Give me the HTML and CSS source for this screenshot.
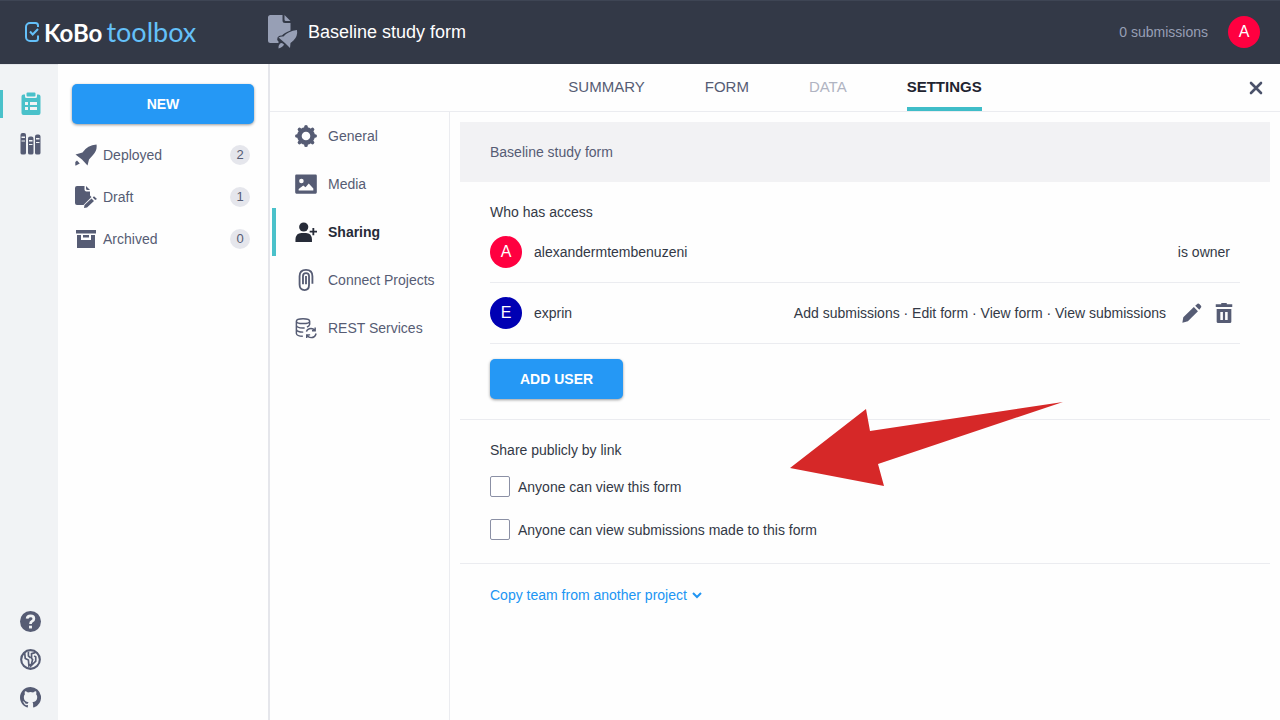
FILE: index.html
```html
<!DOCTYPE html>
<html lang="en">
<head>
<meta charset="utf-8">
<meta name="viewport" content="width=device-width, initial-scale=1">
<title>Baseline study form</title>
<link rel="stylesheet" href="styles.css">
</head>
<body>
<header class="header">
  <a class="logo" href="#">
    <svg class="logo-mark" viewBox="0 0 16 22" aria-hidden="true"><path d="M14 6V4.500A2.500 2.500 0 0 0 11.500 2H6A4 4 0 0 0 2 6V16A4 4 0 0 0 6 20H11.500A2.500 2.500 0 0 0 14 17.500V14.500M6 10.500L8.700 13.500L14 8"/></svg>
    <span class="logo-text"><b>KoBo</b> <i>toolbox</i></span>
  </a>
  <div class="project">
    <svg class="project-icon" viewBox="0 0 30 34" aria-hidden="true"><path d="M2.500 0H14.500V5.500Q14.500 8 17 8H22.500V15.500Q16 18 14 20.500Q11 20 9.500 22.500Q8.500 24.500 10.500 26.500V28H2.500Q0 28 0 25.500V2.500Q0 0 2.500 0ZM16.500 0L22.500 6H18Q16.500 6 16.500 4.500ZM29 15Q30 21 25.500 25.500L22.500 28L22 33L17.500 28.500L10.500 22.500Q13 21 15.500 21.500Q20 16 29 15ZM12 28.500Q14 27 16 29.500Q15 32 10.500 33.500Q10.500 30 12 28.500Z"/></svg>
    <h1 class="project-title">Baseline study form</h1>
  </div>
  <span class="count">0 submissions</span>
  <button class="avatar avatar-red" type="button" aria-label="Account">A</button>
</header>

<div class="shell">
  <nav class="rail" aria-label="Main">
    <a class="rail-link rail-active" href="#" aria-label="Projects"><svg class="icon" viewBox="0 0 24 24"><path fill-rule="evenodd" d="M7.500 1.500Q7.500 .5 8.500 .5H15.500Q16.500 .5 16.500 1.500V3.500Q16.500 4.500 15.500 4.500H8.500Q7.500 4.500 7.500 3.500ZM4.500 2.500H6V4.500Q6 6 7.500 6H16.500Q18 6 18 4.500V2.500H19.500Q21.500 2.500 21.500 4.500V21Q21.500 23 19.500 23H4.500Q2.500 23 2.500 21V4.500Q2.500 2.500 4.500 2.500ZM6 10V13H9V10ZM11 10V13H18V10ZM6 15V18H9V15ZM11 15V18H18V15Z"/></svg></a>
    <a class="rail-link" href="#" aria-label="Library"><svg class="icon" viewBox="0 0 24 24"><path fill-rule="evenodd" d="M3.500 1H5Q7 1 7 3V21Q7 22.500 5 22.500H3.500Q1.500 22.500 1.500 21V3Q1.500 1 3.500 1ZM2.500 4.500V6H6V4.500ZM2.500 8.500V9.500H6V8.500ZM11 4.500H12.500Q14.500 4.500 14.500 6.500V21Q14.500 22.500 12.500 22.500H11Q9 22.500 9 21V6.500Q9 4.500 11 4.500ZM10 8V9.500H13.500V8ZM10 12V13H13.500V12ZM18 2.500H19.500Q21.500 2.500 21.500 4.500V21Q21.500 22.500 19.500 22.500H18Q16 22.500 16 21V4.500Q16 2.500 18 2.500ZM17 6V7.500H20.500V6ZM17 10V11H20.500V10Z"/></svg></a>
    <div class="rail-bottom">
      <a class="rail-small" href="#" aria-label="Help"><svg class="icon-small" viewBox="0 0 20 20"><circle cx="10" cy="10" r="10"/><path class="cut-line" d="M6.800 7.300Q7 4.600 10 4.600Q13.200 4.600 13.200 7.300Q13.200 9 11.500 9.700Q10 10.300 10 12.300"/><rect class="cut" x="8.600" y="14" width="2.800" height="2.600"/></svg></a>
      <a class="rail-small" href="#" aria-label="Language and region"><svg class="icon-small" viewBox="0 0 20 20"><circle class="line" cx="10" cy="10" r="8.900"/><path class="line-thin" d="M4.500 4L5 9L8 10.500L8.500 16L10 14.500M8 2.500V6.500L10 8.500M14.500 3.500L11 4.500V9L12 10L10.500 16L15 11.500V7.500L13.500 6.500"/></svg></a>
      <a class="rail-small" href="#" aria-label="Source code"><svg class="icon-small" viewBox="0 0 16 16"><path d="M8 0C3.580 0 0 3.580 0 8c0 3.540 2.290 6.530 5.470 7.590.4.070.55-.17.55-.38 0-.19-.01-.82-.01-1.490-2.010.37-2.530-.49-2.690-.94-.09-.23-.48-.94-.82-1.130-.28-.15-.68-.52-.01-.53.63-.01 1.080.58 1.230.82.72 1.210 1.870.87 2.330.66.07-.52.28-.87.51-1.070-1.780-.2-3.640-.89-3.640-3.950 0-.87.31-1.590.82-2.150-.08-.2-.36-1.020.08-2.120 0 0 .67-.21 2.200.82a7.600 7.600 0 0 1 4 0c1.530-1.040 2.200-.82 2.200-.82.44 1.100.16 1.920.08 2.120.51.56.82 1.270.82 2.150 0 3.070-1.870 3.750-3.650 3.950.29.25.54.73.54 1.480 0 1.070-.01 1.930-.01 2.200 0 .21.15.46.55.38A8 8 0 0 0 8 0Z"/></svg></a>
    </div>
  </nav>

  <aside class="sidebar">
    <button class="button" type="button">NEW</button>
    <ul class="statuses">
      <li><a class="status" href="#"><svg class="icon" viewBox="0 0 22 22"><path d="M21.500 .5Q22.500 6 18 11L14 15.500L12.500 21.500L7 15.500L.5 10.500L7.500 8.500Q12.500 1 21.500 .5ZM2 16.500L4.800 19.500L1 21.500H.3V18Z"/></svg><span class="status-name">Deployed</span><span class="badge">2</span></a></li>
      <li><a class="status" href="#"><svg class="icon" viewBox="0 0 22 22"><path d="M2 0H9.500V3.500Q9.500 5.500 11.500 5.500H15V9.500L16.500 11L8.500 19H2Q0 19 0 17V2Q0 0 2 0ZM11 0L15 4H12.500Q11 4 11 2.500ZM9 22L9.500 19L16.500 12.500L19 15L12 21.500ZM17.700 11.500L19 10.200L22 13L20.200 14Z"/></svg><span class="status-name">Draft</span><span class="badge">1</span></a></li>
      <li><a class="status" href="#"><svg class="icon" viewBox="0 0 22 22"><path fill-rule="evenodd" d="M1 2H21V5.500H1ZM2 7H20V20H2ZM6 7V12H16V7H14V9.500H8V7Z"/></svg><span class="status-name">Archived</span><span class="badge">0</span></a></li>
    </ul>
  </aside>

  <main class="main">
    <div class="tabbar">
      <nav class="tabs" aria-label="Project">
        <a class="tab" href="#">SUMMARY</a>
        <a class="tab" href="#">FORM</a>
        <a class="tab tab-disabled" aria-disabled="true">DATA</a>
        <a class="tab tab-active" href="#" aria-current="page">SETTINGS</a>
      </nav>
      <button class="close" type="button" aria-label="Close"><svg class="close-icon" viewBox="0 0 14 14"><path d="M2 2L12 12M12 2L2 12"/></svg></button>
    </div>

    <div class="workspace">
      <nav class="subnav" aria-label="Settings">
        <a class="subnav-link" href="#"><svg class="icon" viewBox="0 0 24 24"><circle class="gear-ring" cx="12" cy="12" r="7.200"/><path class="gear-teeth" d="M12 2V4M12 20V22M2 12H4M20 12H22M4.900 4.900L6.300 6.300M17.700 17.700L19.100 19.100M4.900 19.100L6.300 17.700M17.700 6.300L19.100 4.900"/></svg>General</a>
        <a class="subnav-link" href="#"><svg class="icon" viewBox="0 0 24 24"><path fill-rule="evenodd" d="M1.500 1.500H22.500Q23.800 1.500 23.800 3V21Q23.800 22.500 22.500 22.500H1.500Q.2 22.500 .2 21V3Q.2 1.500 1.500 1.500ZM7 6.200A2.500 2.500 0 1 0 7 11.200A2.500 2.500 0 1 0 7 6.200ZM4 19H20V17L15 11.500L11.500 15.500L9 13.500L4 17.500Z"/></svg>Media</a>
        <a class="subnav-link subnav-active" href="#" aria-current="page"><svg class="icon" viewBox="0 0 24 24"><circle cx="9.500" cy="6.500" r="5"/><path d="M.5 23V20Q1 13 7 13H12Q18 13 18.500 20V23ZM19 7.500H21V10.500H24V12.500H21V15.500H19V12.500H16V10.500H19Z"/></svg>Sharing</a>
        <a class="subnav-link" href="#"><svg class="icon" viewBox="0 0 24 24"><path class="clip" d="M12 7.500V16.500M8.700 16.500V8Q8.700 4.500 12 4.500Q15.300 4.500 15.300 8V17.500Q15.300 23 10.500 23Q5 23 5 17V8Q5 1 12 1Q19 1 19 8V16"/></svg>Connect Projects</a>
        <a class="subnav-link" href="#"><svg class="icon" viewBox="0 0 24 24"><path class="line-thin" d="M1.500 4.500C1.500 1 16 1 16 4.500S1.500 8 1.500 4.500V18Q2 21 8.500 21M1.500 9Q2 12 8.500 12H10.500M1.500 13.500Q2 16.500 9 16.500M16 4.500V8Q15.500 10 13 11M12.500 16Q13.500 12.500 17.500 12.500Q20 12.500 21.500 14.500M22 11.500V15H18.500M23 18Q22 22.500 17.500 22.500Q15 22.500 13.300 20M12.800 23V19.500H16.500"/></svg>REST Services</a>
      </nav>

      <div class="content">
        <h2 class="form-name">Baseline study form</h2>

        <section class="section">
          <h3 class="section-title">Who has access</h3>
          <ul class="users">
            <li class="user">
              <span class="avatar avatar-red">A</span>
              <span class="user-name">alexandermtembenuzeni</span>
              <span class="role">is owner</span>
            </li>
            <li class="user">
              <span class="avatar avatar-blue">E</span>
              <span class="user-name">exprin</span>
              <span class="perms">Add submissions · Edit form · View form · View submissions</span>
              <span class="actions">
                <button class="icon-button" type="button" aria-label="Edit"><svg class="icon" viewBox="0 0 24 24"><path d="M1.500 22.500L2.500 16.500L14 5.500L18.500 10L7.500 21ZM15.500 4L18 2Q19 1.300 20 2.200L21.800 4Q22.600 5 21.800 6L20 8.500Z"/></svg></button>
                <button class="icon-button" type="button" aria-label="Remove"><svg class="icon" viewBox="0 0 24 24"><path fill-rule="evenodd" d="M9 1H15V2.500H21V5.500H3V2.500H9ZM4 7.500H20V21.500Q20 23 18.500 23H5.500Q4 23 4 21.500ZM8 11V19.500H10.800V11ZM13.200 11V19.500H16V11Z"/></svg></button>
              </span>
            </li>
          </ul>
          <button class="button button-wide" type="button">ADD USER</button>
        </section>

        <section class="section section-public">
          <h3 class="section-title">Share publicly by link</h3>
          <label class="check"><input class="check-box" type="checkbox">Anyone can view this form</label>
          <label class="check"><input class="check-box" type="checkbox">Anyone can view submissions made to this form</label>
        </section>

        <section class="section section-last">
          <a class="copy" href="#">Copy team from another project<svg class="chevron" viewBox="0 0 10 8"><path d="M1 2L5 6L9 2"/></svg></a>
        </section>

        <svg class="arrow" viewBox="0 0 273 84" aria-hidden="true"><path d="M0 66L76 7L80 29L273 0L88 62L94 84Z"/></svg>
      </div>
    </div>
  </main>
</div>
</body>
</html>
```
FILE: styles.css
```css
* { box-sizing: border-box; }

body {
  margin: 0;
  min-height: 100vh;
  display: flex;
  flex-direction: column;
  background: #fefefe;
  color: #333946;
  font: 14px/20px "Liberation Sans", Arial, sans-serif;
}

h1, h2, h3 { margin: 0; font-size: inherit; font-weight: normal; }
ul { margin: 0; padding: 0; list-style: none; }
a { color: inherit; text-decoration: none; }
button { padding: 0; border: 0; background: none; color: inherit; font: inherit; cursor: pointer; }
svg { display: block; flex: none; fill: currentColor; }

.header {
  display: flex;
  align-items: center;
  height: 64px;
  padding: 0 20px 0 24px;
  background: #333947;
  box-shadow: inset 0 1px #3e4554;
  color: #fff;
}

.logo { display: flex; align-items: center; gap: 4px; width: 244px; }
.logo-mark { width: 16px; height: 22px; fill: none; stroke: #64c0f9; stroke-width: 2; }
.logo-text { display: flex; align-items: baseline; gap: 4px; font: 24px/30px Lato, sans-serif; }
.logo-text b { font-weight: bold; }
.logo-text i { color: #64c0f9; font-size: 27px; font-style: normal; }

.project { display: flex; flex: 1; align-items: center; gap: 10px; }
.project-icon { width: 30px; height: 34px; color: #979fb5; }
.project-title { font-size: 18px; }
.count { margin-right: 20px; color: #979fb5; }

.avatar {
  display: flex;
  flex: none;
  align-items: center;
  justify-content: center;
  width: 32px;
  height: 32px;
  border-radius: 50%;
  color: #fff;
  font-size: 16px;
}
.avatar-red { background: #ff0040; }
.avatar-blue { background: #0000b3; }

.shell { display: flex; flex: 1; }

.rail {
  display: flex;
  flex-direction: column;
  width: 58px;
  padding: 25px 0 12px;
  background: #f1f3f5;
  border-top: 1px solid #e4e6ea;
  color: #565c74;
}
.rail-link { display: flex; align-items: center; height: 28px; margin-bottom: 12px; padding-left: 16px; border-left: 3px solid transparent; }
.rail-active { border-color: #4ac1ca; color: #4ac1ca; }
.rail-bottom { display: flex; flex-direction: column; gap: 17px; margin-top: auto; padding-left: 20px; }

.icon { width: 22px; height: 22px; }
.rail .icon { width: 24px; height: 24px; }
.icon-small { width: 21px; height: 21px; }
.line, .line-thin, .clip { fill: none; stroke: currentColor; stroke-width: 2; }
.line-thin { stroke-width: 1.600; }
.gear-ring { fill: none; stroke: currentColor; stroke-width: 5; }
.gear-teeth { fill: none; stroke: currentColor; stroke-width: 4; stroke-linecap: round; }
.cut { fill: #f1f3f5; }
.cut-line { fill: none; stroke: #f1f3f5; stroke-width: 2.600; }

.sidebar {
  width: 212px;
  padding: 20px 14px;
  border-right: 2px solid #e5e6eb;
  color: #565c74;
}
.button {
  width: 100%;
  height: 40px;
  border-radius: 5px;
  background: #2598f5;
  box-shadow: 0 1px 3px rgba(0, 0, 0, .4);
  color: #fff;
  font-weight: bold;
}
.button-wide { width: auto; padding: 0 30px; }
.statuses { margin-top: 10px; }
.status { display: flex; align-items: center; height: 42px; padding: 0 4px 0 3px; }
.status-name { flex: 1; margin-left: 6px; }
.badge { width: 20px; border-radius: 50%; background: #e5e6ec; font-size: 13px; text-align: center; }

.main { display: flex; flex: 1; flex-direction: column; min-width: 0; }
.tabbar {
  display: grid;
  grid-template-columns: 1fr auto 1fr;
  height: 48px;
  border-bottom: 1px solid #ebecf0;
}
.tabs { display: flex; grid-column: 2; gap: 60px; color: #565c74; font-size: 15px; line-height: 46px; }
.tab-disabled { color: #b0b4c2; }
.tab-active { height: 47px; border-bottom: 4px solid #3fbdc8; color: #1f2430; font-weight: bold; }
.close { justify-self: end; margin-right: 17px; color: #4b526a; }
.close-icon { width: 14px; height: 14px; }
.close-icon path { stroke: currentColor; stroke-width: 2.600; stroke-linecap: round; }

.workspace { display: flex; flex: 1; }
.subnav { width: 180px; padding-left: 2px; border-right: 1px solid #ebecf0; color: #565c74; }
.subnav-link { display: flex; align-items: center; gap: 11px; height: 48px; padding-left: 19px; border-left: 4px solid transparent; white-space: nowrap; }
.subnav-active { border-color: #4ac1ca; color: #262b38; font-weight: bold; }

.content { position: relative; flex: 1; padding: 10px; }
.form-name { padding: 20px 30px; background: #f2f2f4; color: #565c74; }
.section { padding: 20px 30px; border-bottom: 1px solid #ebecf0; }
.section-public { padding-bottom: 23px; }
.section-last { padding-top: 21px; border-bottom: 0; }
.users { margin-bottom: 15px; }
.user { display: flex; align-items: center; gap: 12px; height: 61px; border-bottom: 1px solid #ebecf0; }
.user-name { flex: 1; }
.role { margin-right: 10px; }
.actions { display: flex; gap: 10px; margin: 0 5px 0 3px; color: #565c74; }

.check { display: flex; align-items: center; gap: 8px; margin-top: 16px; width: max-content; }
.check + .check { margin-top: 22px; }
.check-box {
  appearance: none;
  width: 20px;
  height: 21px;
  margin: 0;
  border: 1px solid #8b90a5;
  border-radius: 2px;
  background: #fff;
}
.copy { display: inline-flex; align-items: center; gap: 5px; color: #2095f3; }
.chevron { width: 10px; height: 8px; fill: none; stroke: currentColor; stroke-width: 2; }

.arrow { position: absolute; top: 290px; left: 340px; width: 273px; height: 84px; color: #d62828; }
```
